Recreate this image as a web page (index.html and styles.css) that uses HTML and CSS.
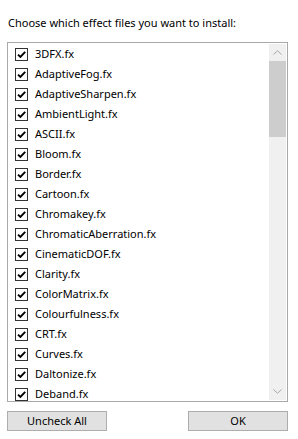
FILE: index.html
```html
<!DOCTYPE html>
<html>
<head>
<meta charset="utf-8">
<link rel="stylesheet" href="styles.css">
</head>
<body>
<div class="dialog">
  <div class="label">Choose which effect files you want to install:</div>
  <div class="listbox">
    <div class="items">
      <div class="item"><span class="cb"><svg viewBox="0 0 11 11"><path d="M2 5.6 L4.4 8 L9.2 2.8"/></svg></span><span class="txt">3DFX.fx</span></div>
      <div class="item"><span class="cb"><svg viewBox="0 0 11 11"><path d="M2 5.6 L4.4 8 L9.2 2.8"/></svg></span><span class="txt">AdaptiveFog.fx</span></div>
      <div class="item"><span class="cb"><svg viewBox="0 0 11 11"><path d="M2 5.6 L4.4 8 L9.2 2.8"/></svg></span><span class="txt">AdaptiveSharpen.fx</span></div>
      <div class="item"><span class="cb"><svg viewBox="0 0 11 11"><path d="M2 5.6 L4.4 8 L9.2 2.8"/></svg></span><span class="txt">AmbientLight.fx</span></div>
      <div class="item"><span class="cb"><svg viewBox="0 0 11 11"><path d="M2 5.6 L4.4 8 L9.2 2.8"/></svg></span><span class="txt">ASCII.fx</span></div>
      <div class="item"><span class="cb"><svg viewBox="0 0 11 11"><path d="M2 5.6 L4.4 8 L9.2 2.8"/></svg></span><span class="txt">Bloom.fx</span></div>
      <div class="item"><span class="cb"><svg viewBox="0 0 11 11"><path d="M2 5.6 L4.4 8 L9.2 2.8"/></svg></span><span class="txt">Border.fx</span></div>
      <div class="item"><span class="cb"><svg viewBox="0 0 11 11"><path d="M2 5.6 L4.4 8 L9.2 2.8"/></svg></span><span class="txt">Cartoon.fx</span></div>
      <div class="item"><span class="cb"><svg viewBox="0 0 11 11"><path d="M2 5.6 L4.4 8 L9.2 2.8"/></svg></span><span class="txt">Chromakey.fx</span></div>
      <div class="item"><span class="cb"><svg viewBox="0 0 11 11"><path d="M2 5.6 L4.4 8 L9.2 2.8"/></svg></span><span class="txt">ChromaticAberration.fx</span></div>
      <div class="item"><span class="cb"><svg viewBox="0 0 11 11"><path d="M2 5.6 L4.4 8 L9.2 2.8"/></svg></span><span class="txt">CinematicDOF.fx</span></div>
      <div class="item"><span class="cb"><svg viewBox="0 0 11 11"><path d="M2 5.6 L4.4 8 L9.2 2.8"/></svg></span><span class="txt">Clarity.fx</span></div>
      <div class="item"><span class="cb"><svg viewBox="0 0 11 11"><path d="M2 5.6 L4.4 8 L9.2 2.8"/></svg></span><span class="txt">ColorMatrix.fx</span></div>
      <div class="item"><span class="cb"><svg viewBox="0 0 11 11"><path d="M2 5.6 L4.4 8 L9.2 2.8"/></svg></span><span class="txt">Colourfulness.fx</span></div>
      <div class="item"><span class="cb"><svg viewBox="0 0 11 11"><path d="M2 5.6 L4.4 8 L9.2 2.8"/></svg></span><span class="txt">CRT.fx</span></div>
      <div class="item"><span class="cb"><svg viewBox="0 0 11 11"><path d="M2 5.6 L4.4 8 L9.2 2.8"/></svg></span><span class="txt">Curves.fx</span></div>
      <div class="item"><span class="cb"><svg viewBox="0 0 11 11"><path d="M2 5.6 L4.4 8 L9.2 2.8"/></svg></span><span class="txt">Daltonize.fx</span></div>
      <div class="item"><span class="cb"><svg viewBox="0 0 11 11"><path d="M2 5.6 L4.4 8 L9.2 2.8"/></svg></span><span class="txt">Deband.fx</span></div>
    </div>
    <div class="scrollbar">
      <div class="arrow"><svg viewBox="0 0 9 5"><path d="M0.5 4.5 L4.5 0.8 L8.5 4.5"/></svg></div>
      <div class="track">
        <div class="thumb"></div>
      </div>
      <div class="arrow"><svg viewBox="0 0 9 5"><path d="M0.5 0.5 L4.5 4.2 L8.5 0.5"/></svg></div>
    </div>
  </div>
  <div class="buttons">
    <button class="btn">Uncheck All</button>
    <button class="btn">OK</button>
  </div>
</div>
</body>
</html>
```
FILE: styles.css
```css
html, body {
  margin: 0;
  padding: 0;
  background: #ffffff;
}
body {
  font-family: "Noto Sans", "Open Sans", sans-serif;
  font-size: 11px;
  color: #000;
}
.dialog {
  width: 298px;
  height: 439px;
  display: flex;
  flex-direction: column;
}
.label {
  margin: 15px 0 0 8px;
  line-height: 16px;
  height: 16px;
}
.listbox {
  margin: 11px 0 0 7px;
  width: 281px;
  height: 360px;
  box-sizing: border-box;
  border: 1px solid #a9a9a9;
  display: flex;
  overflow: hidden;
}
.items {
  flex: 1;
  padding-top: 1px;
  overflow: hidden;
}
.item {
  height: 20px;
  display: flex;
  align-items: center;
  padding-left: 7px;
}
.cb {
  width: 13px;
  height: 13px;
  box-sizing: border-box;
  border: 1px solid #333333;
  background: #fff;
  display: flex;
  align-items: center;
  justify-content: center;
  margin-top: 1px;
}
.cb svg {
  width: 11px;
  height: 11px;
}
.cb path {
  fill: none;
  stroke: #000;
  stroke-width: 1.9;
}
.txt {
  margin-left: 7px;
  line-height: 16px;
}
.scrollbar {
  width: 17px;
  margin: 1px 1px 1px 0;
  background: #f0f0f0;
  display: flex;
  flex-direction: column;
}
.arrow {
  height: 17px;
  display: flex;
  align-items: center;
  justify-content: center;
}
.arrow svg {
  width: 9px;
  height: 5px;
}
.arrow path {
  fill: none;
  stroke: #a6a6a6;
  stroke-width: 1;
}
.track {
  flex: 1;
}
.thumb {
  height: 76px;
  background: #cdcdcd;
}
.buttons {
  display: flex;
  justify-content: space-between;
  margin: 9px 10px 0 7px;
}
.btn {
  width: 100px;
  height: 20px;
  box-sizing: border-box;
  border: 1px solid #adadad;
  background: #e1e1e1;
  font-family: "Noto Sans", "Open Sans", sans-serif;
  font-size: 11px;
  color: #000;
  padding: 0;
  line-height: 16px;
}
```
